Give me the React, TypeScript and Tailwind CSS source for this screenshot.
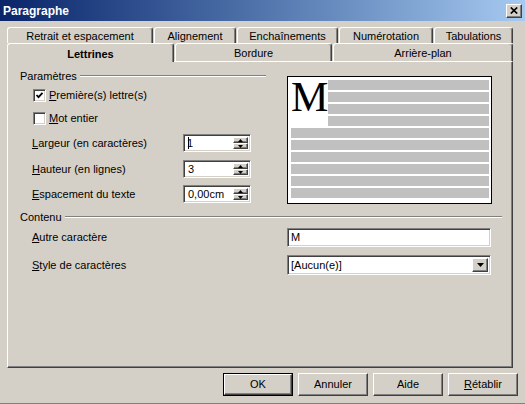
import React from "react";

// classic win9x bevels
const raised =
  "border border-t-white border-l-white border-r-[#404040] border-b-[#404040] shadow-[inset_-1px_-1px_0_#808080]";
const sunken =
  "border border-t-[#808080] border-l-[#808080] border-r-white border-b-white shadow-[inset_1px_1px_0_#404040,inset_-1px_-1px_0_#d4d0c8]";

function Tab({
  label,
  className = "",
  active = false,
}: {
  label: string;
  className?: string;
  active?: boolean;
}) {
  return (
    <div
      className={`flex shrink-0 items-center justify-center rounded-t-[3px] border-l border-r border-t border-l-white border-r-[#404040] border-t-white bg-[#d4d0c8] pt-[2px] shadow-[inset_-1px_0_0_#808080] ${
        active ? "relative z-10 h-[19px] font-bold" : "h-full"
      } ${className}`}
    >
      {label}
    </div>
  );
}

function GroupTitle({ label }: { label: string }) {
  return (
    <div className="flex h-[14px] items-center gap-[3px]">
      <span>{label}</span>
      <div className="h-[2px] flex-1 border-b border-t border-b-white border-t-[#808080]" />
    </div>
  );
}

function Checkbox({ checked, children }: { checked?: boolean; children: React.ReactNode }) {
  return (
    <div className="flex h-[13px] items-center pl-[13px]">
      <div className={`flex h-[13px] w-[13px] shrink-0 items-center justify-center bg-white ${sunken}`}>
        {checked && (
          <svg width="9" height="9" viewBox="0 0 9 9">
            <polyline points="1.5,4 3.5,6.2 7.5,1.8" fill="none" stroke="#000" strokeWidth="1.8" />
          </svg>
        )}
      </div>
      <span className="ml-[3px]">{children}</span>
    </div>
  );
}

function Arrow({ up }: { up?: boolean }) {
  return (
    <svg width="5" height="3" viewBox="0 0 5 3">
      <polygon points={up ? "0,3 2.5,0 5,3" : "0,0 5,0 2.5,3"} fill="#000" />
    </svg>
  );
}

function Spin({ children }: { children: React.ReactNode }) {
  return (
    <div className={`flex h-[18px] w-[68px] bg-white p-[2px] ${sunken}`}>
      <div className="flex flex-1 items-center overflow-hidden pl-[2px] leading-none">{children}</div>
      <div className="flex w-[15px] flex-col">
        <div className={`flex flex-1 items-center justify-center bg-[#d4d0c8] ${raised}`}>
          <Arrow up />
        </div>
        <div className={`flex flex-1 items-center justify-center bg-[#d4d0c8] ${raised}`}>
          <Arrow />
        </div>
      </div>
    </div>
  );
}

function SpinRow({ hot, rest, value, className = "" }: { hot: string; rest: string; value: React.ReactNode; className?: string }) {
  return (
    <div className={`flex items-center pl-[12px] ${className}`}>
      <span className="w-[151px]">
        <span className="underline">{hot}</span>
        {rest}
      </span>
      <Spin>{value}</Spin>
    </div>
  );
}

function Button({ children, isDefault }: { children: React.ReactNode; isDefault?: boolean }) {
  const inner = (
    <div className={`flex h-full w-full items-center justify-center bg-[#d4d0c8] ${raised}`}>{children}</div>
  );
  return isDefault ? (
    <div className="h-[23px] w-[70px] border border-black">{inner}</div>
  ) : (
    <div className="h-[23px] w-[70px]">{inner}</div>
  );
}

function Bar({ className = "" }: { className?: string }) {
  return <div className={`h-[10px] bg-[#c0c0c0] ${className}`} />;
}

export default function App() {
  return (
    <div className="flex h-[404px] w-[525px] flex-col overflow-hidden border-b border-b-[#808080] bg-[#d4d0c8] font-['Liberation_Sans',Arial,sans-serif] text-[11px] text-black">
      {/* title bar */}
      <div className="flex h-[21px] shrink-0 items-center justify-between bg-gradient-to-r from-[#0a246a] to-[#a6caf0] pl-[3px] pr-[3px]">
        <span className="text-[12px] font-bold text-white">Paragraphe</span>
        <div className={`flex h-[14px] w-[16px] items-center justify-center bg-[#d4d0c8] ${raised}`}>
          <svg width="8" height="7" viewBox="0 0 8 7">
            <path d="M0.8 0.5 L7.2 6.5 M7.2 0.5 L0.8 6.5" stroke="#000" strokeWidth="1.7" />
          </svg>
        </div>
      </div>

      {/* tabs */}
      <div className="mt-[5px] flex h-[17px] gap-[1px] pl-[7px] pt-[1px]">
        <Tab label="Retrait et espacement" className="w-[146px]" />
        <Tab label="Alignement" className="w-[82px]" />
        <Tab label="Enchaînements" className="w-[101px]" />
        <Tab label="Numérotation" className="w-[94px]" />
        <Tab label="Tabulations" className="w-[79px]" />
      </div>
      <div className="flex h-[18px] items-start gap-[1px] pl-[7px]">
        <Tab label="Lettrines" className="w-[167px]" active />
        <Tab label="Bordure" className="w-[157px]" />
        <Tab label="Arrière-plan" className="w-[180px]" />
      </div>

      {/* page */}
      <div
        className={`ml-[7px] h-[307px] w-[506px] shrink-0 border-t border-t-white pl-[12px] pr-[10px] pt-[7px] ${raised}`}
      >
        <div className="flex items-start">
          <div className="w-[246px]">
            <GroupTitle label="Paramètres" />
            <div className="mt-[6px]">
              <Checkbox checked>
                <span className="underline">P</span>remière(s) lettre(s)
              </Checkbox>
            </div>
            <div className="mt-[10px]">
              <Checkbox>
                <span className="underline">M</span>ot entier
              </Checkbox>
            </div>
            <SpinRow
              className="mt-[9px]"
              hot="L"
              rest="argeur (en caractères)"
              value={
                <>
                  <span className="inline-block h-[13px] w-[1px] bg-black" />
                  <span className="-ml-[2px]">1</span>
                </>
              }
            />
            <SpinRow className="mt-[8px]" hot="H" rest="auteur (en lignes)" value="3" />
            <SpinRow className="mt-[7px]" hot="E" rest="spacement du texte" value="0,00cm" />
          </div>

          {/* preview */}
          <div className="ml-[21px] mt-[7px] h-[128px] w-[205px] border border-black bg-white pl-[3px] pr-[2px] pt-[3px]">
            <div className="flex">
              <div className="h-[46px] w-[37px] font-['Liberation_Serif','Times_New_Roman',serif] text-[42px] leading-[34px]">
                M
              </div>
              <div className="flex flex-1 flex-col gap-[2px]">
                <Bar />
                <Bar />
                <Bar />
                <Bar />
              </div>
            </div>
            <div className="mt-[2px] flex flex-col gap-[2px]">
              <Bar />
              <Bar />
              <Bar />
              <Bar />
              <Bar />
              <Bar />
            </div>
          </div>
        </div>

        <div className="mt-[6px]">
          <GroupTitle label="Contenu" />
        </div>
        <div className="mt-[4px] flex items-center pl-[12px]">
          <span className="w-[255px]">
            <span className="underline">A</span>utre caractère
          </span>
          <div className={`flex h-[19px] w-[204px] items-center bg-white pl-[3px] ${sunken}`}>M</div>
        </div>
        <div className="mt-[8px] flex items-center pl-[12px]">
          <span className="w-[255px]">
            <span className="underline">S</span>tyle de caractères
          </span>
          <div className={`flex h-[20px] w-[204px] items-center bg-white p-[2px] ${sunken}`}>
            <span className="flex-1 pl-[1px]">[Aucun(e)]</span>
            <div className={`flex h-full w-[16px] items-center justify-center bg-[#d4d0c8] ${raised}`}>
              <svg width="7" height="4" viewBox="0 0 7 4">
                <polygon points="0,0 7,0 3.5,4" fill="#000" />
              </svg>
            </div>
          </div>
        </div>
      </div>

      {/* buttons */}
      <div className="mt-[5px] flex justify-end gap-[5px] pr-[7px]">
        <Button isDefault>OK</Button>
        <Button>Annuler</Button>
        <Button>Aide</Button>
        <Button>
          <span className="underline">R</span>établir
        </Button>
      </div>
    </div>
  );
}
